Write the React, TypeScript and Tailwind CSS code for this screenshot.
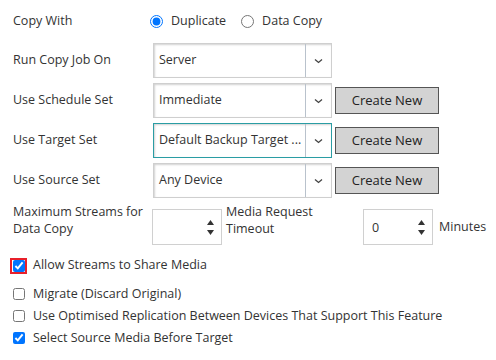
import React from 'react';

const Chevron = () => (
  <svg width="9" height="6" viewBox="0 0 9 6" fill="none">
    <path d="M1 1.5l3.5 3 3.5-3" stroke="#444" strokeWidth="1.3" />
  </svg>
);

function SelectBox({ value, focused }: { value: string; focused?: boolean }) {
  return (
    <div
      className={`flex h-[35px] w-[179px] border bg-white shadow-[inset_1px_1px_2px_rgba(0,0,0,0.18)] ${
        focused ? 'border-[#2a9da4]' : 'border-[#cfcfcf]'
      }`}
    >
      <div className="flex-1 flex items-center pl-[5px] overflow-hidden whitespace-nowrap border-r border-[#b9c2cc]">
        {value}
      </div>
      <div className="w-[25px] flex items-center justify-center">
        <Chevron />
      </div>
    </div>
  );
}

const CreateButton = () => (
  <button className="ml-[3px] h-[27px] w-[104px] bg-[#d3d3d3] border border-[#555] text-[13px] text-[#222]">
    Create New
  </button>
);

function NumberBox({ value }: { value?: string }) {
  return (
    <div className="flex h-[36px] w-[70px] border border-[#d0d0d0] bg-white">
      <div className="flex-1 flex items-center pl-[8px]">{value}</div>
      <div className="w-[14px] mr-[4px] flex flex-col items-center justify-center gap-[5px]">
        <svg width="7" height="5" viewBox="0 0 7 5"><path d="M3.5 0L7 5H0z" fill="#333" /></svg>
        <svg width="7" height="5" viewBox="0 0 7 5"><path d="M0 0h7L3.5 5z" fill="#333" /></svg>
      </div>
    </div>
  );
}

const rows = [
  { label: 'Run Copy Job On', value: 'Server', button: false },
  { label: 'Use Schedule Set', value: 'Immediate', button: true },
  { label: 'Use Target Set', value: 'Default Backup Target ...', button: true, focused: true },
  { label: 'Use Source Set', value: 'Any Device', button: true },
];

const checks = [
  { label: 'Migrate (Discard Original)', checked: false },
  { label: 'Use Optimised Replication Between Devices That Support This Feature', checked: false },
  { label: 'Select Source Media Before Target', checked: true },
];

export default function App() {
  return (
    <div className="w-[496px] h-[360px] bg-white pl-[13px] pt-[11px] font-['Open_Sans',sans-serif] text-[12.5px] text-[#333] overflow-hidden">
      {/* Copy With */}
      <div className="flex items-center h-[20px]">
        <div className="w-[137px]">Copy With</div>
        <label className="flex items-center">
          <input type="radio" name="copy" defaultChecked className="m-0 w-[13px] h-[13px] accent-[#0075ff]" />
          <span className="ml-[8px]">Duplicate</span>
        </label>
        <label className="flex items-center ml-[15px]">
          <input type="radio" name="copy" className="m-0 w-[13px] h-[13px]" />
          <span className="ml-[8px]">Data Copy</span>
        </label>
      </div>

      <div className="mt-[12px] flex flex-col gap-[5px]">
        {rows.map((r) => (
          <div key={r.label} className="flex items-center h-[35px]">
            <div className="w-[140px]">{r.label}</div>
            <SelectBox value={r.value} focused={r.focused} />
            {r.button && <CreateButton />}
          </div>
        ))}
      </div>

      {/* Streams / timeout */}
      <div className="mt-[5px] flex items-start leading-[17px]">
        <div className="w-[139px]">
          Maximum Streams for
          <br />
          Data Copy
        </div>
        <div className="mt-[6px]">
          <NumberBox />
        </div>
        <div className="w-[137px] ml-[4px]">
          Media Request
          <br />
          Timeout
        </div>
        <div className="mt-[6px]">
          <NumberBox value="0" />
        </div>
        <div className="ml-[6px] mt-[15px]">Minutes</div>
      </div>

      {/* Checkboxes */}
      <div className="mt-[10px] flex items-center h-[21px]">
        <div className="-ml-[3px] w-[17px] h-[16px] border-2 border-[#e8202a] flex items-center justify-center">
          <input type="checkbox" defaultChecked className="m-0 w-[12px] h-[12px] accent-[#0075ff]" />
        </div>
        <span className="ml-[6px]">Allow Streams to Share Media</span>
      </div>

      <div className="mt-[7px] flex flex-col">
        {checks.map((c) => (
          <label key={c.label} className="flex items-center h-[22px]">
            <input type="checkbox" defaultChecked={c.checked} className="m-0 w-[12px] h-[12px] accent-[#0075ff]" />
            <span className="ml-[8px]">{c.label}</span>
          </label>
        ))}
      </div>
    </div>
  );
}
